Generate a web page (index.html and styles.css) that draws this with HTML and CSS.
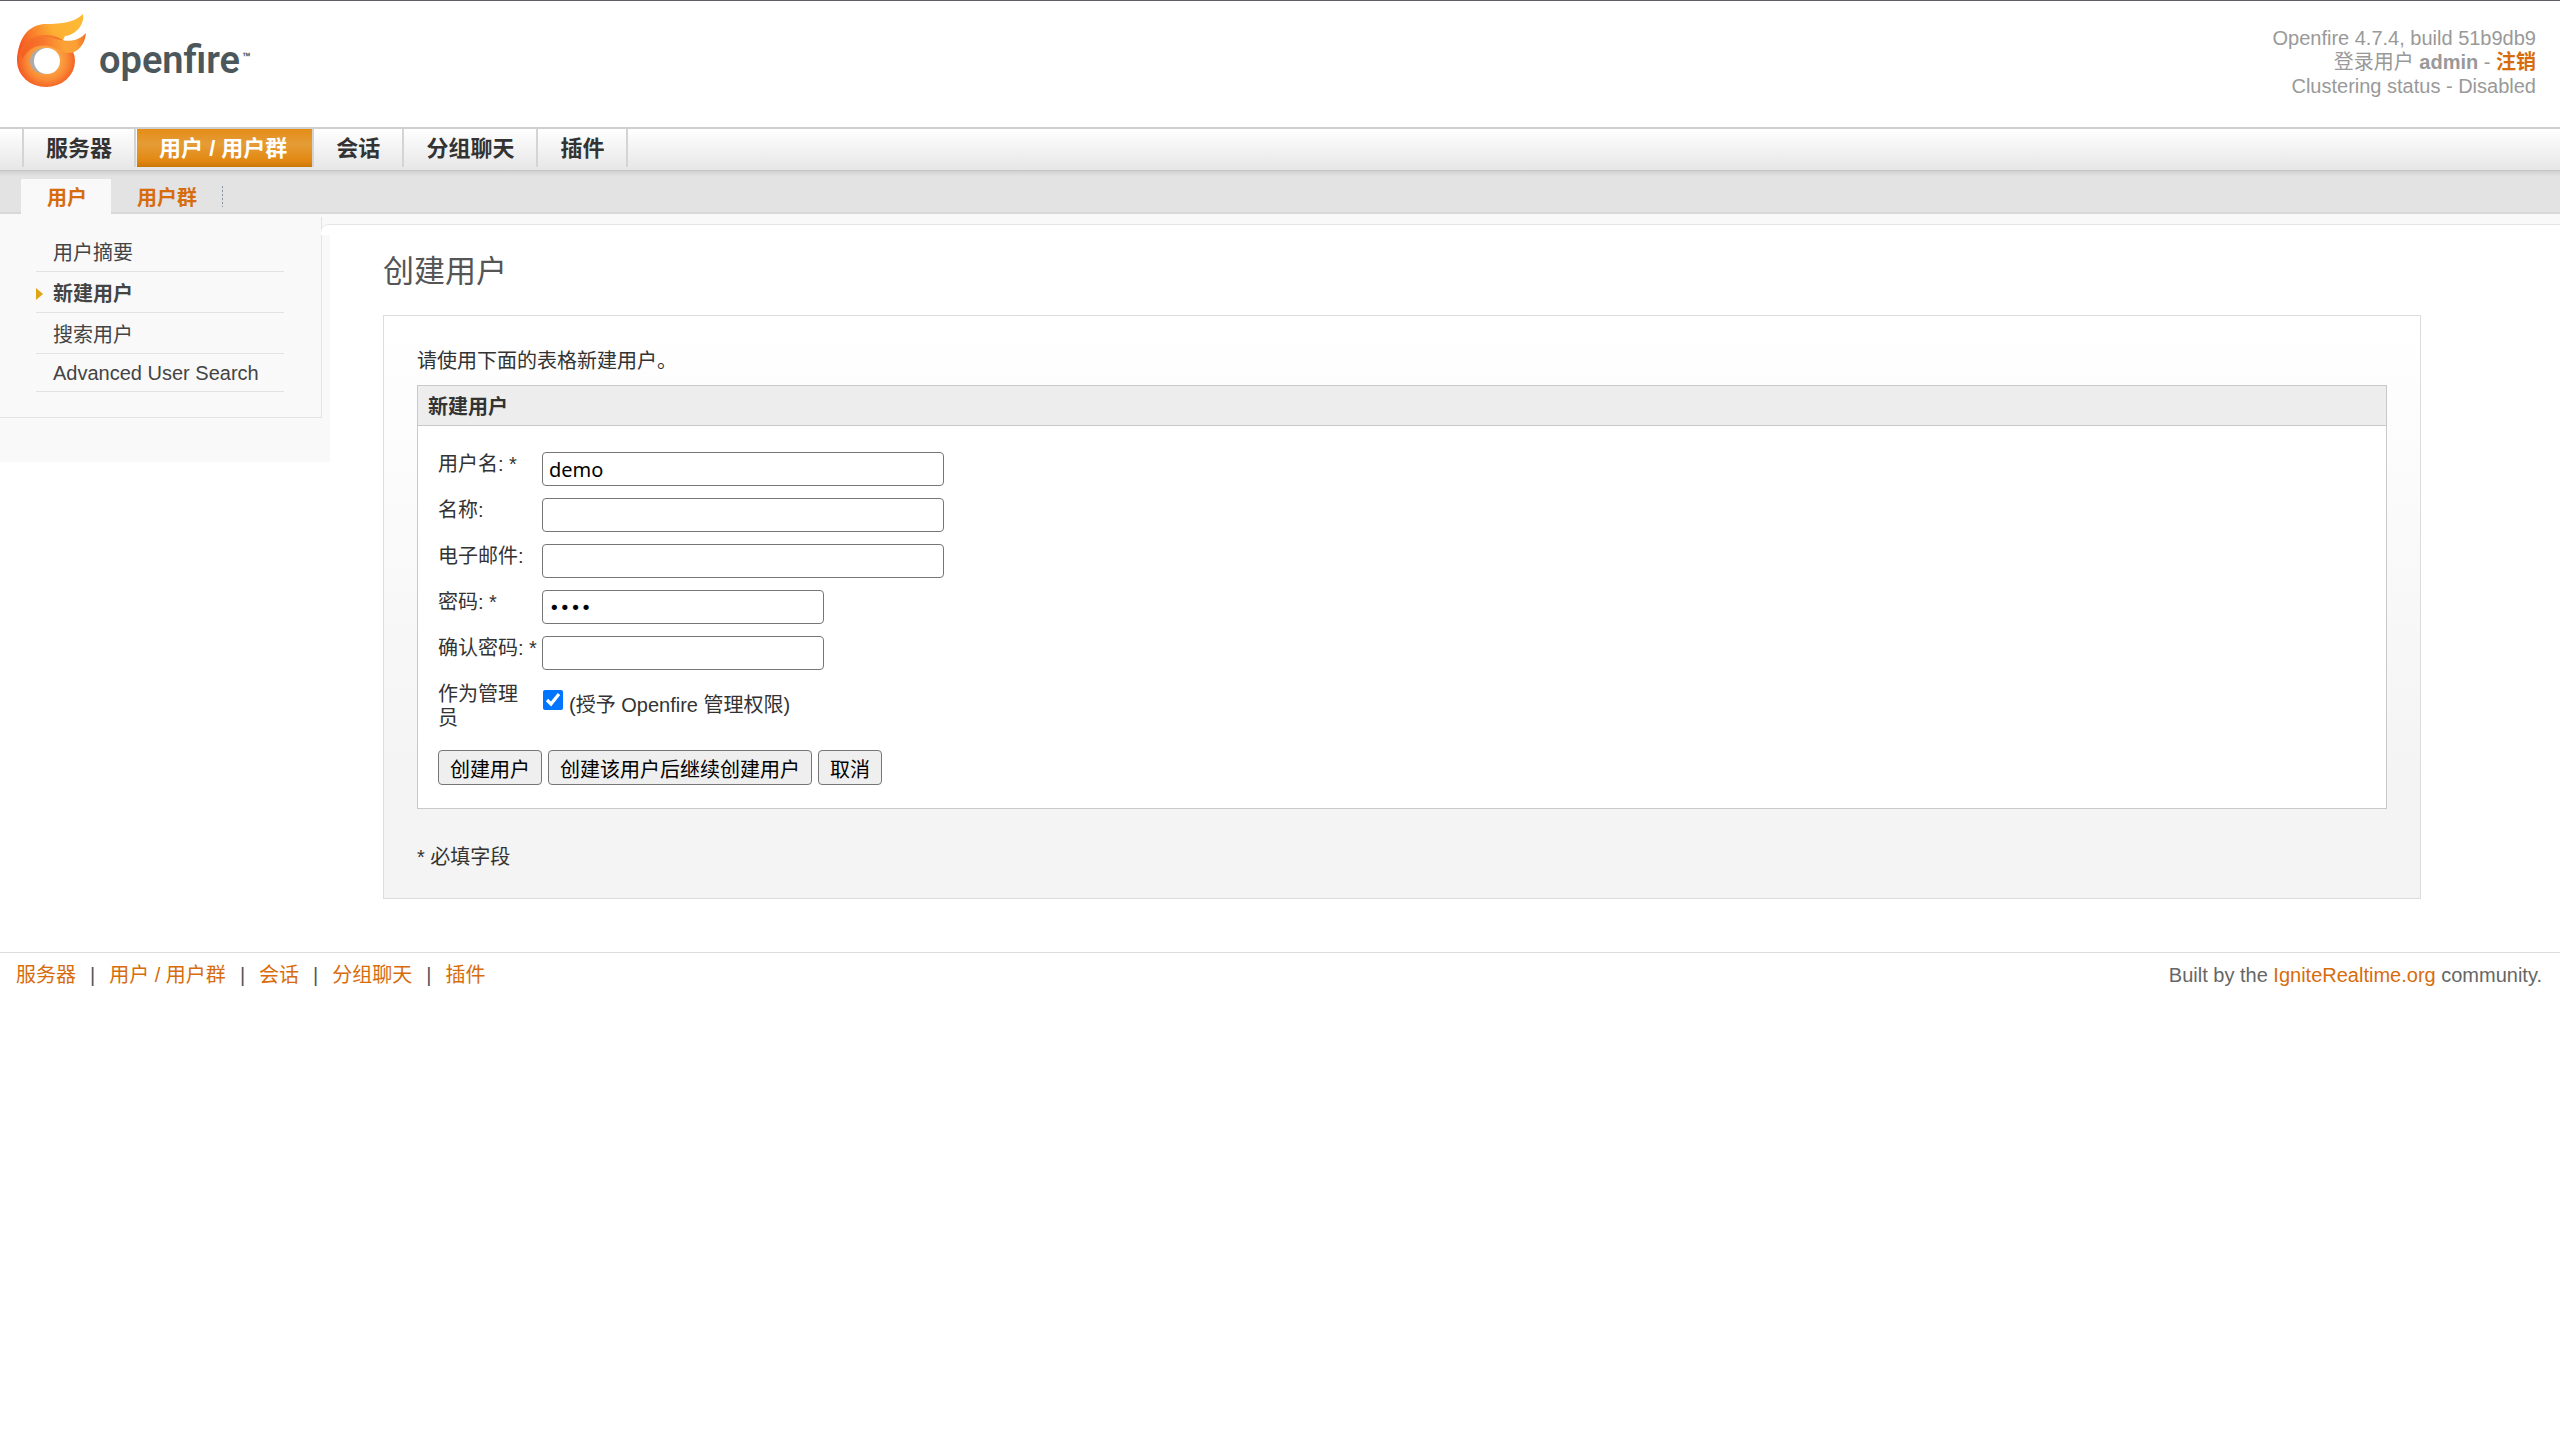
FILE: index.html
```html
<!DOCTYPE html>
<html lang="zh-CN">
<head>
  <meta charset="UTF-8">
  <meta name="viewport" content="width=device-width, initial-scale=1.0">
  <title>Openfire 管理界面: 创建用户</title>
  <link rel="stylesheet" href="styles.css">
</head>
<body>
  <!-- Header -->
  <header class="header">
    <a class="logo" href="#" aria-label="Openfire">
      <svg width="240" height="80" viewBox="0 0 240 80">
        <defs>
          <radialGradient id="ring" gradientUnits="userSpaceOnUse" cx="30" cy="46" r="31">
            <stop offset="0.4" stop-color="#fba544"/>
            <stop offset="0.65" stop-color="#f98b36"/>
            <stop offset="1" stop-color="#f4511e"/>
          </radialGradient>
          <linearGradient id="flameBack" gradientUnits="userSpaceOnUse" x1="2" y1="36" x2="62" y2="10">
            <stop offset="0" stop-color="#f4511e"/>
            <stop offset="0.3" stop-color="#f9812b"/>
            <stop offset="0.6" stop-color="#fdb033"/>
            <stop offset="1" stop-color="#fdb935"/>
          </linearGradient>
          <linearGradient id="flameFront" gradientUnits="userSpaceOnUse" x1="4" y1="36" x2="68" y2="26">
            <stop offset="0" stop-color="#f4601f"/>
            <stop offset="0.35" stop-color="#f7762d"/>
            <stop offset="0.65" stop-color="#fba136"/>
            <stop offset="0.85" stop-color="#fba136"/>
            <stop offset="1" stop-color="#f37324"/>
          </linearGradient>
        </defs>
        <path d="M0 47C1 24 11 11 28 10C46 10 58 8 66 0C68 10 59 21 48 22L44 30L4 50Z" fill="url(#flameBack)"/>
        <ellipse cx="29" cy="47" rx="29" ry="26" fill="url(#ring)"/>
        <path d="M4 40C8 27 18 22 32 23C49 29 61 28 69 19C68 31 60 40 50 39C44 39 42 34 31 32C18 30 10 36 5 46Z" fill="url(#flameFront)"/>
        <ellipse cx="28" cy="47" rx="15" ry="13" fill="#a9abad"/>
        <ellipse cx="30" cy="47" rx="13" ry="13" fill="#fff"/>
        <text class="logo-name" x="82" y="59">openfire</text>
        <text class="logo-mark" x="225" y="48">™</text>
      </svg>
    </a>
    <div class="userbox">
      Openfire 4.7.4, build 51b9db9<br>
      登录用户 <strong>admin</strong> - <a href="#"><strong>注销</strong></a><br>
      Clustering status - Disabled
    </div>
  </header>

  <!-- Main tabs -->
  <nav class="nav">
    <a href="#">服务器</a>
    <a class="current" href="#">用户 / 用户群</a>
    <a href="#">会话</a>
    <a href="#">分组聊天</a>
    <a href="#">插件</a>
  </nav>
  <nav class="subnav">
    <a class="current" href="#">用户</a>
    <a href="#">用户群</a>
  </nav>

  <div class="main">
    <!-- Sidebar -->
    <aside class="sidebar">
      <ul class="sidebar-menu">
        <li><a href="#">用户摘要</a></li>
        <li class="current"><a href="#">新建用户</a></li>
        <li><a href="#">搜索用户</a></li>
        <li><a href="#">Advanced User Search</a></li>
      </ul>
    </aside>

    <!-- Content -->
    <main class="content">
      <h1>创建用户</h1>
      <div class="panel">
        <p class="intro">请使用下面的表格新建用户。</p>
        <form class="box">
          <h2>新建用户</h2>
          <div class="box-body">
            <div class="fields">
              <label for="username">用户名: *</label>
              <input class="text-field" type="text" id="username" value="demo">
              <label for="name">名称:</label>
              <input class="text-field" type="text" id="name">
              <label for="email">电子邮件:</label>
              <input class="text-field" type="text" id="email">
              <label for="password">密码: *</label>
              <input class="text-field short" type="password" id="password" value="demo">
              <label for="passwordConfirm">确认密码: *</label>
              <input class="text-field short" type="password" id="passwordConfirm">
              <label class="admin-label" for="isadmin">作为管理员</label>
              <div class="check">
                <input type="checkbox" id="isadmin" checked>
                <span>(授予 Openfire 管理权限)</span>
              </div>
            </div>
            <div class="buttons">
              <button type="button">创建用户</button>
              <button type="button">创建该用户后继续创建用户</button>
              <button type="button">取消</button>
            </div>
          </div>
        </form>
        <p class="required">* 必填字段</p>
      </div>
    </main>
  </div>

  <!-- Footer -->
  <footer class="footer">
    <nav class="footer-nav">
      <a href="#">服务器</a>
      <span>|</span>
      <a href="#">用户 / 用户群</a>
      <span>|</span>
      <a href="#">会话</a>
      <span>|</span>
      <a href="#">分组聊天</a>
      <span>|</span>
      <a href="#">插件</a>
    </nav>
    <div>Built by the <a href="#">IgniteRealtime.org</a> community.</div>
  </footer>
</body>
</html>
```

FILE: styles.css
```css
* {
  box-sizing: border-box;
}

body {
  margin: 0;
  border-top: 1px solid #5f5f66;
  background-color: #fff;
  color: #333;
  font-family: "Liberation Sans", "Noto Sans CJK SC", sans-serif;
  font-size: 20px;
  line-height: 24px;
}

a {
  color: #d76c0d;
  text-decoration: none;
}

/* Header */
.header {
  display: flex;
  justify-content: space-between;
  height: 126px;
  padding: 13px 24px 0 17px;
}

.logo svg {
  display: block;
}

.logo-name {
  font-family: Roboto, sans-serif;
  font-size: 38px;
  font-weight: 600;
  fill: #4b575b;
}

.logo-mark {
  font-family: Roboto, sans-serif;
  font-size: 13px;
  font-weight: bold;
  fill: #4b575b;
}

.userbox {
  padding-top: 12px;
  color: #999;
  text-align: right;
}

/* Main tabs */
.nav {
  display: flex;
  height: 44px;
  padding-left: 22px;
  border-top: 2px solid #cfcfcf;
  border-bottom: 1px solid #c6c6c6;
  background: linear-gradient(#fff, #e6e6e6);
}

.nav a {
  height: 38px;
  padding: 0 22px;
  border-right: 2px solid #d4d4d4;
  color: #333;
  font-size: 22px;
  font-weight: bold;
  line-height: 40px;
}

.nav a:first-child {
  border-left: 2px solid #d4d4d4;
}

.nav a.current {
  margin-left: 1px;
  padding-right: 25px;
  background: linear-gradient(#e48d17, #e59c37 40%, #e28710 85%, #c97606);
  color: #fff;
}

.subnav {
  display: flex;
  height: 43px;
  padding: 8px 0 0 21px;
  border-bottom: 2px solid #d8d8d8;
  background: linear-gradient(#d0d0d0, #e3e3e3 5px);
}

.subnav a {
  height: 35px;
  padding: 0 26px;
  font-weight: bold;
  line-height: 38px;
  background: repeating-linear-gradient(#8c96a0 0 2px, #d8d8d8 2px 4px) no-repeat right 7px / 1px 21px;
}

.subnav a.current {
  padding-right: 24px;
  background: #f9f9f9;
}

/* Sidebar and content */
.main {
  display: flex;
  align-items: flex-start;
  background: linear-gradient(#f9f9f9, #f9f9f9) no-repeat 0 0 / 100% 10px;
}

.sidebar {
  flex: 0 0 330px;
  height: 248px;
  padding: 3px 8px 0 0;
  background-color: #f9f9f9;
}

.sidebar-menu {
  height: 201px;
  margin: 0;
  padding: 14px 37px 0 36px;
  border-right: 1px solid #e3e3e3;
  border-bottom: 1px solid #e3e3e3;
  list-style: none;
}

.sidebar-menu li {
  display: flex;
  align-items: center;
  height: 41px;
  padding: 3px 0 0 17px;
  border-bottom: 1px solid #e3e3e3;
}

.sidebar-menu li:last-child {
  height: 38px;
  padding-top: 0;
}

.sidebar-menu a {
  color: #444;
}

.sidebar-menu .current {
  padding-left: 0;
  font-weight: bold;
}

.sidebar-menu .current::before {
  content: "";
  margin-right: 10px;
  border-left: 7px solid #dca614;
  border-top: 6px solid transparent;
  border-bottom: 6px solid transparent;
}

.content {
  position: relative;
  flex: 1;
  margin-top: 10px;
  padding: 30px 139px 53px 53px;
  border-top: 1px solid #e6e6e6;
}

/* rounded corner over the edge of the sidebar */
.content::before {
  content: "";
  position: absolute;
  top: -1px;
  left: -9px;
  width: 9px;
  height: 10px;
  border-top: 1px solid #e6e6e6;
  border-top-left-radius: 8px;
  background-color: #fff;
}

h1 {
  margin: 0 0 26px;
  color: #555;
  font-size: 31px;
  font-weight: normal;
  line-height: 34px;
}

.panel {
  padding: 33px 33px 29px;
  border: 1px solid #dcdcdc;
  background: linear-gradient(#fff, #f4f4f4 460px);
}

.intro {
  margin: 0 0 12px;
}

.box {
  border: 1px solid #c9c9c9;
  background-color: #fff;
}

.box h2 {
  margin: 0;
  padding: 3px 0 0 10px;
  border-bottom: 1px solid #c9c9c9;
  background-color: #ededed;
  font-size: 20px;
  line-height: 36px;
}

.box-body {
  padding: 26px 20px 23px;
}

.fields {
  display: grid;
  grid-template-columns: 92px auto;
  grid-auto-rows: 34px;
  gap: 12px;
  justify-content: start;
}

.fields label {
  white-space: nowrap;
}

.fields .admin-label {
  line-height: 24px;
  white-space: normal;
}

.text-field {
  width: 402px;
  height: 34px;
  padding: 0 6px;
  border: 1px solid #767676;
  border-radius: 4px;
  color: #000;
  font-family: "Noto Sans", sans-serif;
  font-size: 20px;
}

.text-field.short {
  width: 282px;
  font-family: "DejaVu Sans", sans-serif;
  font-size: 18px;
}

.check {
  display: flex;
  align-items: flex-start;
  gap: 6px;
  padding-top: 8px;
}

.check input {
  width: 20px;
  height: 20px;
  margin: 0 0 0 1px;
}

.check span {
  padding-top: 3px;
}

.buttons {
  display: flex;
  gap: 6px;
  margin-top: 34px;
}

.buttons button {
  height: 35px;
  padding: 2px 11px 0;
  border: 1px solid #767676;
  border-radius: 4px;
  background-color: #efefef;
  color: #000;
  font-family: inherit;
  font-size: 20px;
}

.required {
  margin: 36px 0 0;
}

/* Footer */
.footer {
  display: flex;
  justify-content: space-between;
  padding: 10px 18px 10px 16px;
  border-top: 1px solid #dcdcdc;
  color: #666;
}

.footer-nav {
  display: flex;
  gap: 14px;
}

.footer-nav span {
  color: #555;
}
```
